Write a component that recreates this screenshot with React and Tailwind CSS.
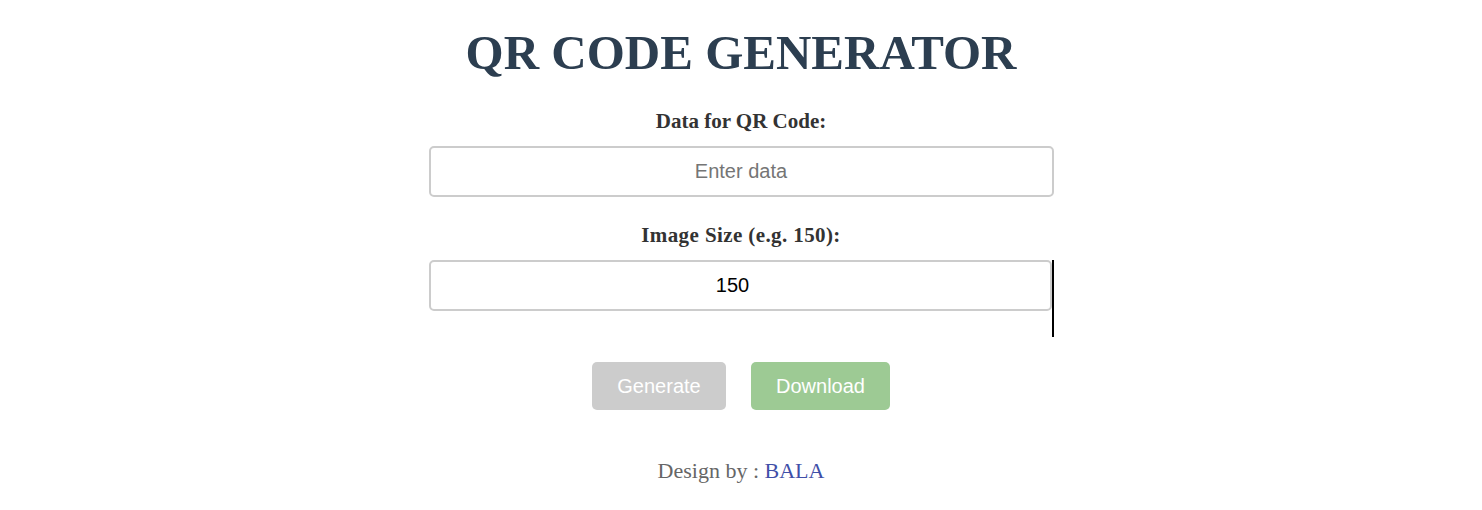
import React, { useState } from 'react';

const serif = "font-['Liberation_Serif','DejaVu_Serif',serif]";
const sans = "font-['Liberation_Sans',Arial,sans-serif]";

function App() {
  const [data, setData] = useState('');
  const [size, setSize] = useState('150');

  return (
    <div className="min-h-screen bg-white flex flex-col items-center">
      <h1 className={`${serif} mt-[23px] text-[49px] leading-[60px] font-bold text-[#2c3e50]`}>
        QR CODE GENERATOR
      </h1>

      <label className={`${serif} mt-[26px] text-[21px] leading-[24px] font-bold text-[#333]`}>
        Data for QR Code:
      </label>
      <input
        type="text"
        value={data}
        onChange={(e) => setData(e.target.value)}
        placeholder="Enter data"
        className={`${sans} mt-[13px] w-[625px] h-[51px] border-2 border-[#cccccc] rounded-[5px] text-center text-[20px] text-black placeholder:text-[#757575] outline-none`}
      />

      <label className={`${serif} mt-[26px] text-[21px] leading-[24px] font-bold tracking-[0.4px] text-[#333]`}>
        Image Size (e.g. 150):
      </label>
      <div className="mt-[13px] w-[625px] h-[77px] border-r-2 border-black">
        <input
          type="number"
          value={size}
          onChange={(e) => setSize(e.target.value)}
          className={`${sans} w-full h-[51px] border-2 border-[#cccccc] rounded-[5px] text-center text-[20px] text-black outline-none`}
        />
      </div>

      <div className="mt-[25px] flex gap-[25px]">
        <button className={`${sans} w-[134px] h-[48px] rounded-[5px] bg-[#cccccc] text-white text-[20px]`}>
          Generate
        </button>
        <button className={`${sans} w-[139px] h-[48px] rounded-[5px] bg-[#9dca94] text-white text-[20px]`}>
          Download
        </button>
      </div>

      <p className={`${serif} mt-[48px] text-[22px] leading-[26px] text-[#666]`}>
        Design by : <span className="text-[#3f4fa8]">BALA</span>
      </p>
    </div>
  );
}

export default App;
